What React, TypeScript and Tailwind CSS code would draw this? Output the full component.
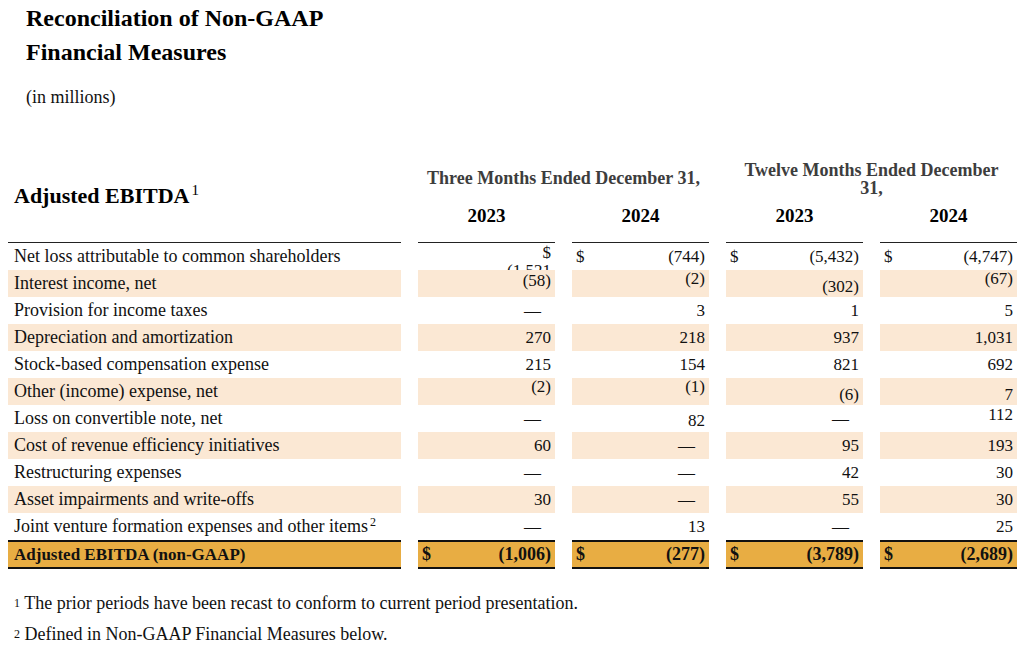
type Cell = { v: string; dollar?: boolean; shift?: number };

type Row = { label: string; sup?: string; shade?: boolean; cells: Cell[] };

const rows: Row[] = [
  {
    label: "Net loss attributable to common shareholders",
    cells: [{ v: "(1,521)" }, { v: "(744)", dollar: true }, { v: "(5,432)", dollar: true }, { v: "(4,747)", dollar: true }],
  },
  { label: "Interest income, net", shade: true, cells: [{ v: "(58)", shift: -3 }, { v: "(2)", shift: -5 }, { v: "(302)", shift: 3 }, { v: "(67)", shift: -5 }] },
  { label: "Provision for income taxes", cells: [{ v: "—" }, { v: "3" }, { v: "1" }, { v: "5" }] },
  { label: "Depreciation and amortization", shade: true, cells: [{ v: "270" }, { v: "218" }, { v: "937" }, { v: "1,031" }] },
  { label: "Stock-based compensation expense", cells: [{ v: "215" }, { v: "154" }, { v: "821" }, { v: "692" }] },
  { label: "Other (income) expense, net", shade: true, cells: [{ v: "(2)", shift: -5 }, { v: "(1)", shift: -5 }, { v: "(6)", shift: 3 }, { v: "7", shift: 3 }] },
  { label: "Loss on convertible note, net", cells: [{ v: "—" }, { v: "82", shift: 2 }, { v: "—" }, { v: "112", shift: -4 }] },
  { label: "Cost of revenue efficiency initiatives", shade: true, cells: [{ v: "60" }, { v: "—" }, { v: "95" }, { v: "193" }] },
  { label: "Restructuring expenses", cells: [{ v: "—" }, { v: "—" }, { v: "42" }, { v: "30" }] },
  { label: "Asset impairments and write-offs", shade: true, cells: [{ v: "30" }, { v: "—" }, { v: "55" }, { v: "30" }] },
  { label: "Joint venture formation expenses and other items", sup: "2", cells: [{ v: "—" }, { v: "13" }, { v: "—" }, { v: "25" }] },
];

const totals = ["(1,006)", "(277)", "(3,789)", "(2,689)"];

const grid = "grid grid-cols-[393px_137px_137px_137px_137px] gap-x-[17px]";

function ValueCell({ cell, shade, first }: { cell: Cell; shade?: boolean; first: boolean }) {
  const bg = shade ? "bg-[#fbe8d4]" : "";
  const top = first ? "border-t border-[#222]" : "";
  if (cell.v === "(1,521)") {
    // wrapped and clipped in the source, kept that way
    return (
      <div className={`${top} h-[28px] overflow-hidden flex flex-col items-end pr-1 leading-[18px] pt-[1px]`}>
        <span>$</span>
        <span>(1,521</span>
      </div>
    );
  }
  return (
    <div className={`${top} ${bg} h-[27px] flex items-center justify-between px-1 ${first ? "h-[28px]" : ""}`}>
      <span>{cell.dollar ? "$" : ""}</span>
      <span className={cell.v === "—" ? "pr-[10px]" : ""} style={cell.shift ? { transform: `translateY(${cell.shift}px)` } : undefined}>
        {cell.v}
      </span>
    </div>
  );
}

export default function App() {
  return (
    <div className="w-[1024px] h-[650px] overflow-hidden bg-white text-[#111] font-['Liberation_Serif',serif]">
      <div className="pl-[26px] pt-[1px]">
        <h1 className="text-[24px] font-bold leading-[34px] text-black">
          Reconciliation of Non-GAAP
          <br />
          Financial Measures
        </h1>
        <p className="mt-4 text-[18px] leading-6">(in millions)</p>
      </div>

      <div className="ml-2 mt-[51px] w-[1010px]">
        <div className={`${grid} grid-rows-[37px_38px]`}>
          <div className="row-span-2 flex items-center pl-[6px] pb-[5px] text-[22px] font-bold text-black">
            Adjusted EBITDA<span className="ml-[2px] -translate-y-[5px] text-[15px] font-normal">1</span>
          </div>
          <div className="col-span-2 flex items-center justify-center text-[18px] font-bold text-[#3d3d3d]">
            Three Months Ended December 31,
          </div>
          <div className="col-span-2 flex items-center justify-center text-center text-[18px] font-bold leading-[18px] text-[#3d3d3d]">
            Twelve Months Ended December
            <br />
            31,
          </div>
          {["2023", "2024", "2023", "2024"].map((y, i) => (
            <div key={i} className="flex items-center justify-center text-[19px] font-bold text-black">
              {y}
            </div>
          ))}
        </div>

        <div className="mt-[7px] text-[17px]">
          {rows.map((r, ri) => (
            <div key={r.label} className={grid}>
              <div
                className={`${ri === 0 ? "border-t border-[#222] h-[28px]" : "h-[27px]"} ${r.shade ? "bg-[#fbe8d4]" : ""} flex items-center pl-[6px] whitespace-nowrap text-[18px]`}
              >
                {r.label}
                {r.sup && <span className="ml-[2px] -translate-y-[5px] text-[12px]">{r.sup}</span>}
              </div>
              {r.cells.map((c, ci) => (
                <ValueCell key={ci} cell={c} shade={r.shade} first={ri === 0} />
              ))}
            </div>
          ))}
          <div className={`${grid} font-bold`}>
            <div className="h-[29px] border-y-2 border-[#111] bg-[#e8ad43] flex items-center pl-[6px]">Adjusted EBITDA (non-GAAP)</div>
            {totals.map((t) => (
              <div key={t} className="h-[29px] border-y-2 border-[#111] bg-[#e8ad43] flex items-center justify-between px-1 text-[18px]">
                <span>$</span>
                <span>{t}</span>
              </div>
            ))}
          </div>
        </div>

        <div className="mt-[22px] pl-[6px] text-[18px] leading-6">
          <p>
            <span className="text-[12px] align-top">1</span> The prior periods have been recast to conform to current period presentation.
          </p>
          <p className="mt-[7px]">
            <span className="text-[12px] align-top">2</span> Defined in Non-GAAP Financial Measures below.
          </p>
        </div>
      </div>
    </div>
  );
}
